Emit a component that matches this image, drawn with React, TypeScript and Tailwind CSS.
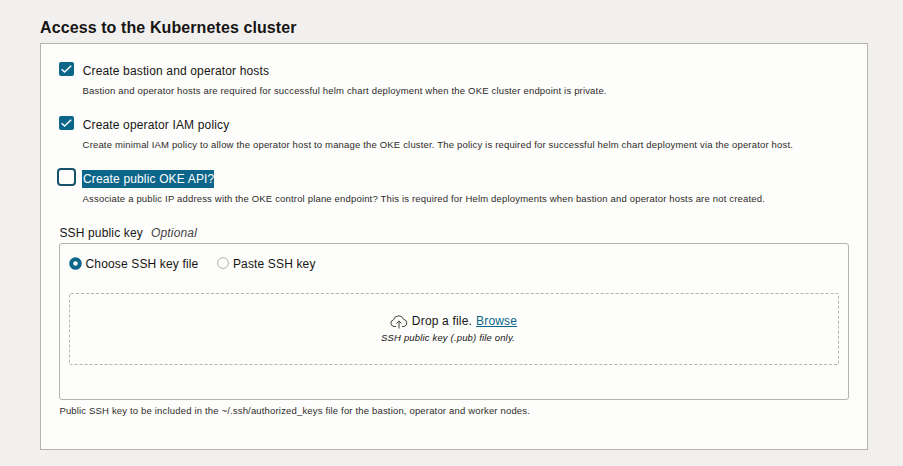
import React from "react";

type CheckRowProps = {
  label: string;
  help: string;
  checked?: boolean;
  selected?: boolean;
};

function CheckRow({ label, help, checked = false, selected = false }: CheckRowProps) {
  return (
    <div className="flex h-[54px]">
      <div className="flex w-[25px] shrink-0 justify-start">
        {checked ? (
          <svg className="ml-[2px] mt-px h-[14px] w-[15px]" viewBox="0 0 15 14">
            <rect width="15" height="14" rx="2" fill="#0c668a" />
            <path d="M2.6 7.2 5.6 10.1 12.2 3.7" fill="none" stroke="#fff" strokeWidth="1.4" />
          </svg>
        ) : (
          <span className="-mt-px h-[18px] w-[19px] rounded-[4px] border-2 border-[#17506a] bg-[#fdfdfb]" />
        )}
      </div>
      <div className="pt-px">
        <div className="flex h-[18px] items-center text-[12px] leading-[18px] tracking-[0.15px]">
          {selected ? (
            <span className="whitespace-nowrap bg-[#0c668a] pl-px text-white">{label}</span>
          ) : (
            <span className="whitespace-nowrap pl-[0.7px]">{label}</span>
          )}
        </div>
        <p className="mt-[4px] whitespace-nowrap pl-[0.6px] text-[9.5px] leading-[14px] tracking-[0.172px] text-[#2e2b28]">{help}</p>
      </div>
    </div>
  );
}

export default function App() {
  return (
    <main className="h-[466px] w-[903px] bg-[#f2f0ef] pl-10 pt-[17px] font-['Liberation_Sans',Arial,sans-serif] text-[#161513]">
      <h1 className="h-[26px] whitespace-nowrap text-[16px] font-bold leading-[21px] tracking-[0.1px]">Access to the Kubernetes cluster</h1>
      <section className="h-[407px] w-[828px] border border-[#b5b2af] bg-[#fdfdfb] pl-[18px] pt-[17px]">
        <div className="-ml-[2px]">
          <CheckRow checked label="Create bastion and operator hosts" help="Bastion and operator hosts are required for successful helm chart deployment when the OKE cluster endpoint is private." />
          <CheckRow checked label="Create operator IAM policy" help="Create minimal IAM policy to allow the operator host to manage the OKE cluster. The policy is required for successful helm chart deployment via the operator host." />
          <CheckRow selected label="Create public OKE API?" help="Associate a public IP address with the OKE control plane endpoint? This is required for Helm deployments when bastion and operator hosts are not created." />
        </div>
        <div className="flex h-[20px] gap-2 pl-[0.4px] pt-px text-[12px] leading-[18px] tracking-[0.16px]">
          <span>SSH public key</span>
          <em className="text-[#45423f]">Optional</em>
        </div>
        <div className="h-[157px] w-[790px] rounded-[3px] border border-[#b5b2af] px-[9px] pt-[11px]">
          <div className="flex h-[18px] items-center text-[12px] leading-[18px] tracking-[0.15px]">
            <svg className="mb-px mr-[3.5px] h-[13px] w-[13px]" viewBox="0 0 13 13">
              <circle cx="6.5" cy="6.5" r="4.3" fill="none" stroke="#0c668a" strokeWidth="4" />
            </svg>
            <span>Choose SSH key file</span>
            <svg className="mb-[2px] ml-[18.5px] mr-[4px] h-3 w-3" viewBox="0 0 12 12">
              <circle cx="6" cy="6" r="5.4" fill="none" stroke="#b3b0ad" />
            </svg>
            <span>Paste SSH key</span>
          </div>
          <div className="mt-[20px] flex h-[72px] flex-col items-center rounded-[2px] border border-dashed border-[#b5b2af] pt-[18px]">
            <div className="flex h-[18px] items-center text-[12px] leading-[18px] tracking-[0.18px]">
              <svg className="mr-1 h-[15px] w-[18px]" viewBox="0 0 18 15" fill="none" stroke="#44413e">
                <path d="M6 12.5H4A3.4 3.4 0 0 1 3.6 5.8 5.2 5.2 0 0 1 13.6 5.4 3.6 3.6 0 0 1 14 12.5H12M9 14.5V7.2M6.4 9.5 9 6.9 11.6 9.5" />
              </svg>
              <span>Drop a file.</span>
              <a className="ml-1 mr-px text-[#0c668a] underline">Browse</a>
            </div>
            <p className="mt-px pr-[12px] text-[9.5px] italic leading-[14px] tracking-[0.16px]">SSH public key (.pub) file only.</p>
          </div>
        </div>
        <p className="mt-[4px] pl-[0.4px] text-[9.5px] leading-[14px] tracking-[0.17px] text-[#2e2b28]">Public SSH key to be included in the ~/.ssh/authorized_keys file for the bastion, operator and worker nodes.</p>
      </section>
    </main>
  );
}
